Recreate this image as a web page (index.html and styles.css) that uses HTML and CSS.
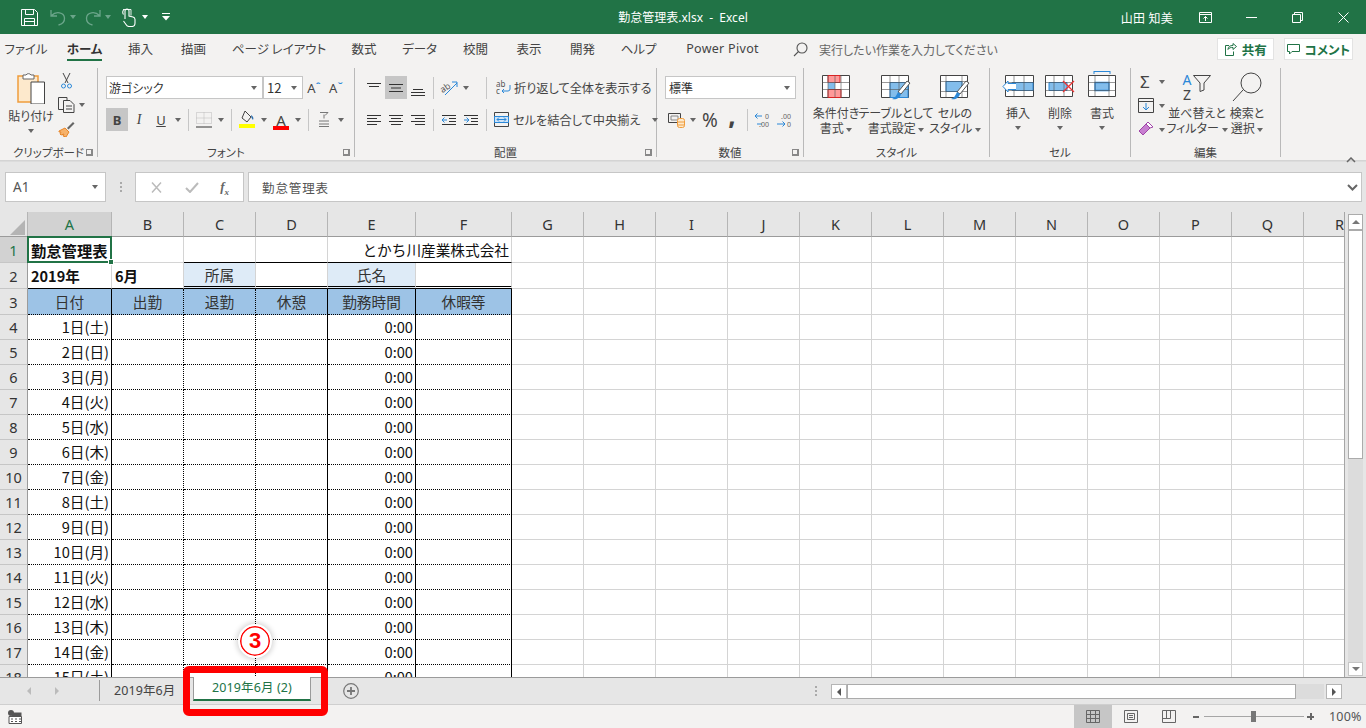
FILE: index.html
```html
<!DOCTYPE html>
<html lang="ja">
<head>
<meta charset="utf-8">
<title>勤怠管理表.xlsx - Excel</title>
<link rel="stylesheet" href="styles.css">
</head>
<body>
<div class="app">
  <header class="titlebar">
    <div class="qat">
      <span class="q q-save"><svg width="17" height="17" viewBox="0 0 17 17" fill="none" stroke="#fff"><path d="M.5.5h13l3 3v13H.5z"/><path d="M4.5.5v5h8v-5M3.5 16.5v-7h10v7M3.5 12.5h10"/></svg></span>
      <span class="q"><svg width="16" height="17" viewBox="0 0 16 17" fill="none" stroke="#6ba58a" stroke-width="1.3"><path d="M1 1v6h6M1.5 6.5C6 2 14 3 14.500 9c.2 3-2 6-6 7"/></svg></span>
      <span class="caret q-c dimc"></span>
      <span class="q q-gap"><svg width="16" height="17" viewBox="0 0 16 17" fill="none" stroke="#6ba58a" stroke-width="1.3"><path d="M15 1v6H9M14.500 6.500C10 2 2 3 1.500 9c-.2 3 2 6 6 7"/></svg></span>
      <span class="caret q-c dimc"></span>
      <span class="q q-touch"><svg width="14" height="19" viewBox="0 0 14 19" fill="none" stroke="#fff" stroke-width="1.1"><path d="M3 11V3a2 2 0 0 1 4 0v5l4 1c1.500.4 2 1 2 2.500V15c0 2-1 3.500-3 3.500H7c-1.500 0-2.500-1-3-2l-2.500-3.500M1.500 6.500a4 4 0 0 1 0-4.500M5 1"/><path d="M1 1.500h8v6" stroke-width=".9"/></svg></span>
      <span class="caret q-c2 whitec"></span>
      <span class="q q-cust"><svg width="10" height="8" viewBox="0 0 10 8" fill="#fff"><rect x="1" y="0" width="8" height="1"/><path d="M1 3h8L5 7.500z"/></svg></span>
    </div>
    <div class="doc-title">勤怠管理表.xlsx&nbsp; -&nbsp; Excel</div>
    <div class="win">
      <span class="user">山田 知美</span>
      <span class="wb"><svg width="13" height="11" viewBox="0 0 13 11" fill="none" stroke="#fff"><path d="M.5.5h12v10H.5zM.5 2.500h12M6.500 9V4.500M4.500 6.500l2-2 2 2"/></svg></span>
      <span class="wb"><svg width="11" height="1" viewBox="0 0 11 1"><rect width="11" height="1" fill="#fff"/></svg></span>
      <span class="wb"><svg width="11" height="11" viewBox="0 0 11 11" fill="none" stroke="#fff"><path d="M.5 2.500h8v8h-8zM2.500 2.500v-2h8v8h-2"/></svg></span>
      <span class="wb"><svg width="11" height="11" viewBox="0 0 11 11" fill="none" stroke="#fff"><path d="M.5.500l10 10M10.500.500l-10 10"/></svg></span>
    </div>
  </header>

  <nav class="tabs">
    <span class="tab">ファイル</span>
    <span class="tab on"><b>ホーム</b></span>
    <span class="tab">挿入</span>
    <span class="tab">描画</span>
    <span class="tab">ページ レイアウト</span>
    <span class="tab">数式</span>
    <span class="tab">データ</span>
    <span class="tab">校閲</span>
    <span class="tab">表示</span>
    <span class="tab">開発</span>
    <span class="tab">ヘルプ</span>
    <span class="tab">Power Pivot</span>
    <span class="tell">
      <svg width="15" height="15" viewBox="0 0 15 15" fill="none" stroke="#555" stroke-width="1.100"><circle cx="9" cy="6" r="5"/><path d="M5.500 9.500L1 14"/></svg>
      実行したい作業を入力してください
    </span>
    <span class="share"><svg width="13" height="13" viewBox="0 0 13 13" fill="none" stroke="#217346"><path d="M9 5.500v-2l3.500 3-3.500 3v-2c-2 0-4 0-5 2 0-3 2-4 5-4z" transform="translate(0 -3)"/><path d="M5 2.500H1.500v10h8v-4"/></svg><b>共有</b></span>
    <span class="share comment"><svg width="13" height="13" viewBox="0 0 13 13" fill="none" stroke="#217346"><path d="M.5 1.500h12v7H5L2.500 11V8.500h-2z"/></svg><b>コメント</b></span>
  </nav>

  <section class="ribbon">
    <div class="grp g-clip">
      <div class="gbody clip-body">
        <div class="paste">
          <svg width="29" height="32" viewBox="0 0 29 32"><path d="M1 4h20v26H1z" fill="#fde9cc" stroke="#f09d3c" stroke-width="1.500"/><path d="M6 3h3a3 3 0 0 1 5 0h3v4H6z" fill="#fff" stroke="#666"/><path d="M14 10h13.500v22H14z" fill="#fff" stroke="#444"/></svg>
          <span class="lbl">貼り付け</span>
          <span class="caret"></span>
        </div>
        <div class="clip-small">
          <span class="sm"><svg width="11" height="16" viewBox="0 0 11 16" fill="none" stroke="#444"><path d="M2 0l5 10M9 0L4 10"/><circle cx="2.500" cy="13" r="2" stroke="#2b88d8"/><circle cx="8.500" cy="13" r="2" stroke="#2b88d8"/></svg></span>
          <span class="sm"><svg width="17" height="16" viewBox="0 0 17 16" fill="none" stroke="#444"><path d="M5 12.500H.5V.5H9v3"/><path d="M5.500 3.500H12l4 4v8H5.500zM8 9h6M8 12h6"/></svg><span class="caret"></span></span>
          <span class="sm"><svg width="17" height="16" viewBox="0 0 17 16"><path d="M1 10l6-3 4 4-3 5-3-1 1-2-3 1-1-1 1-2-2 0z" fill="#f6b26b" stroke="#e8862a"/><path d="M9 7l6-6 1.500 1.500-6 6" fill="#666"/></svg></span>
        </div>
      </div>
      <div class="glabel">クリップボード</div>
      <i class="launch"></i>
    </div>

    <div class="grp g-font">
      <div class="gbody rows">
        <div class="row">
          <span class="combo c-font">游ゴシック<span class="caret"></span></span>
          <span class="combo c-size">12<span class="caret"></span></span>
          <span class="tb fontgrow">A<sup>ˆ</sup></span>
          <span class="tb fontgrow">A<sup>ˇ</sup></span>
        </div>
        <div class="row">
          <span class="tb sel bold">B</span>
          <span class="tb ital">I</span>
          <span class="tb under">U</span><span class="cw"><span class="caret"></span></span>
          <i class="sep"></i>
          <span class="tb"><svg width="16" height="16" viewBox="0 0 16 16" fill="none"><path d="M.5 .5h15v11H.5zM8 .5v11M.5 6h15" stroke="#bbb" stroke-dasharray="1 1"/><path d="M0 15h16" stroke="#333"/></svg></span><span class="cw"><span class="caret"></span></span>
          <i class="sep"></i>
          <span class="tb"><svg width="16" height="19" viewBox="0 0 16 19"><path d="M6 1l6 6-4 5-5-4z" fill="none" stroke="#444"/><path d="M12 5c2 1 3 3 2 5-1-1-2-3-2-5z" fill="#2b6fb0"/><rect y="14" width="16" height="4" fill="#ffff00"/></svg></span><span class="cw"><span class="caret"></span></span>
          <span class="tb colorA">A</span><span class="cw"><span class="caret"></span></span>
          <i class="sep"></i>
          <span class="tb"><svg width="12" height="17" viewBox="0 0 12 17" fill="none" stroke="#777"><path d="M2 1.500h8L7 4.500M6 3.500v4M1 10h10M1 13h10M1 15.500h10"/></svg></span><span class="cw"><span class="caret"></span></span>
        </div>
      </div>
      <div class="glabel">フォント</div>
      <i class="launch"></i>
    </div>

    <div class="grp g-align">
      <div class="gbody rows">
        <div class="row">
          <span class="tb"><svg class="al" viewBox="0 0 14 10"><path d="M0 .5h14M2 3.500h10"/></svg></span>
          <span class="tb sel"><svg class="al" viewBox="0 0 14 10"><path d="M0 1.500h14M2 5h10M0 8.500h14"/></svg></span>
          <span class="tb"><svg class="al al-b" viewBox="0 0 14 10"><path d="M2 3.500h10M0 6.500h14M0 9.500h14"/></svg></span>
          <i class="sep"></i>
          <span class="tb"><svg width="18" height="16" viewBox="0 0 18 16" fill="none"><text x="0" y="11" class="orient" transform="rotate(-35 5 8)">ab</text><path d="M5 15L17 3M12 2h5v5" stroke="#2b88d8"/></svg></span><span class="cw"><span class="caret"></span></span>
          <i class="sep sep-far"></i>
          <span class="txtbtn"><svg width="15" height="15" viewBox="0 0 15 15" fill="none"><text x="0" y="7" class="abc">ab</text><text x="0" y="14" class="abc">c</text><path d="M14 5v4a2 2 0 0 1-2 2H6M8 9l-2 2 2 2" stroke="#2b88d8"/></svg>折り返して全体を表示する</span>
        </div>
        <div class="row">
          <span class="tb"><svg class="al" viewBox="0 0 14 10"><path d="M0 .5h14M0 3.500h10M0 6.500h14M0 9.500h10"/></svg></span>
          <span class="tb"><svg class="al" viewBox="0 0 14 10"><path d="M0 .5h14M2 3.500h10M0 6.500h14M2 9.500h10"/></svg></span>
          <span class="tb"><svg class="al" viewBox="0 0 14 10"><path d="M0 .5h14M4 3.500h10M0 6.500h14M4 9.500h10"/></svg></span>
          <i class="sep"></i>
          <span class="tb"><svg class="al" viewBox="0 0 14 10"><path d="M0 .5h14M7 3.500h7M7 6.500h7M0 9.500h14"/><path d="M5 5H0M2.500 2.500L0 5l2.500 2.500" stroke="#2b88d8"/></svg></span>
          <span class="tb"><svg class="al" viewBox="0 0 14 10"><path d="M0 .5h14M7 3.500h7M7 6.500h7M0 9.500h14"/><path d="M0 5h5M2.500 2.500L5 5 2.500 7.500" stroke="#2b88d8"/></svg></span>
          <i class="sep"></i>
          <span class="txtbtn merge"><svg width="15" height="15" viewBox="0 0 15 15" fill="none"><path d="M.5.5h14v14H.5z" stroke="#444"/><path d="M.5 4.500h14v6H.5z" fill="#cfe4f7" stroke="#2b88d8"/><path d="M3 7.500h9M5 5.500l-2 2 2 2M10 5.500l2 2-2 2" stroke="#2b88d8"/></svg>セルを結合して中央揃え<span class="caret"></span></span>
        </div>
      </div>
      <div class="glabel">配置</div>
      <i class="launch"></i>
    </div>

    <div class="grp g-num">
      <div class="gbody rows">
        <div class="row">
          <span class="combo c-num">標準<span class="caret"></span></span>
        </div>
        <div class="row">
          <span class="tb"><svg width="17" height="17" viewBox="0 0 17 17" fill="none"><path d="M.5 2.500h12v9H.5z" stroke="#444"/><path d="M3 5h7v4H3z" stroke="#888"/><rect x="9.500" y="7.500" width="7" height="9" rx="2" fill="#fde9cc" stroke="#f09d3c"/><path d="M9.500 11h7M9.500 14h7" stroke="#f09d3c"/></svg></span><span class="cw"><span class="caret"></span></span>
          <span class="tb pct">%</span>
          <span class="tb comma">,</span>
          <i class="sep"></i>
          <span class="tb"><svg width="18" height="16" viewBox="0 0 18 16" fill="none"><path d="M8 4H1M3.500 1.500L1 4l2.500 2.500M8 12h-5" stroke="#2b88d8"/><text x="11" y="7" class="dec">0</text><text x="5" y="15" class="dec">.00</text></svg></span>
          <span class="tb"><svg width="18" height="16" viewBox="0 0 18 16" fill="none"><path d="M1 12h8M6.500 9.500L9 12l-2.500 2.500" stroke="#2b88d8"/><text x="5" y="7" class="dec">.00</text><text x="11" y="15" class="dec">0</text></svg></span>
        </div>
      </div>
      <div class="glabel">数値</div>
      <i class="launch"></i>
    </div>

    <div class="grp g-style">
      <div class="gbody big">
        <div class="bb w56">
          <svg class="bi" width="28" height="23" viewBox="0 0 28 23"><path d="M.5.500h27v22H.5z" fill="#fff" stroke="#444"/><path d="M6 .5h12v7H6z" fill="#f99" stroke="#d22"/><path d="M6 7.500h7v7H6z" fill="#83bdeb"/><path d="M6 14.500h13v8H6z" fill="#f99" stroke="#d22"/><path d="M6 .5v22M13 .5v22M19 .5v22M.5 7.500h27M.5 14.500h27" stroke="#555" fill="none" opacity=".6"/></svg>
          <span class="lbl">条件付き</span><span class="lbl">書式 <span class="caret"></span></span>
        </div>
        <div class="bb w64">
          <svg class="bi" width="30" height="28" viewBox="0 0 30 28"><path d="M.5.500h27v22H.5z" fill="#fff" stroke="#444"/><path d="M9 7.500h18v15H9z" fill="#83bdeb" stroke="#2b88d8"/><path d="M9 .5v22M18 .5v22M.5 7.500h27M.5 14.500h27" stroke="#555" fill="none" opacity=".6"/><path d="M29 8l-9 11-3-2 9-11z" fill="#fff" stroke="#555"/><path d="M17 17l3 2c-1 4-5 6-9 5 3-1 4-3 6-7z" fill="#2b88d8"/></svg>
          <span class="lbl">テーブルとして</span><span class="lbl">書式設定 <span class="caret"></span></span>
        </div>
        <div class="bb w54">
          <svg class="bi" width="30" height="28" viewBox="0 0 30 28"><path d="M.5.500h27v22H.5z" fill="#fff" stroke="#444"/><path d="M6 6.500h16v10H6z" fill="#83bdeb" stroke="#2b88d8"/><path d="M6 .5v22M22 .5v22M.5 6.500h27M.5 16.500h27" stroke="#555" fill="none" opacity=".6"/><path d="M29 8l-9 11-3-2 9-11z" fill="#fff" stroke="#555"/><path d="M17 17l3 2c-1 4-5 6-9 5 3-1 4-3 6-7z" fill="#2b88d8"/></svg>
          <span class="lbl">セルの</span><span class="lbl">スタイル <span class="caret"></span></span>
        </div>
      </div>
      <div class="glabel">スタイル</div>
    </div>

    <div class="grp g-cell">
      <div class="gbody big">
        <div class="bb w42">
          <svg class="bi" width="32" height="23" viewBox="0 0 32 23"><path d="M3.500.500h28v21h-28z" fill="#fff" stroke="#444"/><path d="M10 7.500h21v8H10z" fill="#83bdeb" stroke="#2b88d8"/><path d="M12 .5v21M22 .5v21M3.500 7.500h28M3.500 15.500h28" stroke="#555" fill="none" opacity=".6"/><path d="M14 8.500H6V6L1 11.500 6 17v-2.500h8" fill="#fff" stroke="#2b88d8"/></svg>
          <span class="lbl">挿入</span><span class="caret"></span>
        </div>
        <div class="bb w42">
          <svg class="bi" width="30" height="23" viewBox="0 0 30 23"><path d="M.5.500h27v21H.5z" fill="#fff" stroke="#444"/><path d="M4 7.500h18v8H4z" fill="#83bdeb" stroke="#2b88d8"/><path d="M9 .5v21M19 .5v21M.5 7.500h27M.5 15.500h27" stroke="#555" fill="none" opacity=".6"/><path d="M18 6l11 11M29 6L18 17" stroke="#e33" stroke-width="1.300"/></svg>
          <span class="lbl">削除</span><span class="caret"></span>
        </div>
        <div class="bb w42 top0">
          <svg class="bi" width="28" height="27" viewBox="0 0 28 27"><path d="M6 .5h16M6 0v3M22 0v3" stroke="#2b88d8" fill="none"/><path d="M.5 4.500h27v21H.5z" fill="#fff" stroke="#444"/><path d="M7 11.500h14v8H7z" fill="#83bdeb" stroke="#2b88d8" stroke-width="1.300"/><path d="M7 4.500v21M21 4.500v21M.5 11.500h27M.5 19.500h27" stroke="#555" fill="none" opacity=".6"/></svg>
          <span class="lbl">書式</span><span class="caret"></span>
        </div>
      </div>
      <div class="glabel">セル</div>
    </div>

    <div class="grp g-edit">
      <div class="gbody big">
        <div class="edit-small">
          <span class="sm"><span class="sigma">Σ</span><span class="caret"></span></span>
          <span class="sm"><svg width="16" height="15" viewBox="0 0 16 15" fill="none"><path d="M.5.500h15v14H.5z" stroke="#444"/><path d="M.5 3.500h15" stroke="#444"/><path d="M8 5v7M5 9l3 3 3-3" stroke="#2b88d8"/></svg><span class="caret"></span></span>
          <span class="sm"><svg width="16" height="15" viewBox="0 0 16 15"><path d="M1 9l7-7 4 4-7 7z" fill="#c77fd0" stroke="#a045a8"/><path d="M8 2l2-2 5 5-3 1z" fill="#fff" stroke="#a045a8"/></svg><span class="caret"></span></span>
        </div>
        <div class="bb w54 sort">
          <span class="sort-ic"><span class="az"><span class="a-l">A</span><span>Z</span></span><svg width="18" height="17" viewBox="0 0 18 17" fill="none" stroke="#444"><path d="M.5.500h17L11 8v7l-4 1.500V8z"/></svg></span>
          <span class="lbl">並べ替えと</span><span class="lbl">フィルター <span class="caret"></span></span>
        </div>
        <div class="bb w46">
          <svg class="bi" width="30" height="30" viewBox="0 0 30 30" fill="none" stroke="#444"><circle cx="19" cy="11" r="10"/><path d="M11 18L1 29"/></svg>
          <span class="lbl">検索と</span><span class="lbl">選択 <span class="caret"></span></span>
        </div>
      </div>
      <div class="glabel">編集</div>
    </div>
    <div class="collapse"><svg width="10" height="6" viewBox="0 0 10 6" fill="none" stroke="#666" stroke-width="1.500"><path d="M1 5l4-4 4 4"/></svg></div>
  </section>

  <section class="fbar">
    <div class="namebox">A1<span class="caret"></span></div>
    <div class="fdots"><i></i><i></i><i></i></div>
    <div class="fbtns">
      <svg width="13" height="11" viewBox="0 0 13 11" fill="none" stroke="#bbb" stroke-width="1.500"><path d="M2 .5l9 10M11 .5l-9 10"/></svg>
      <svg width="14" height="11" viewBox="0 0 14 11" fill="none" stroke="#bbb" stroke-width="2"><path d="M1 6l4 4 8-9"/></svg>
      <span class="fx">f<sub>x</sub></span>
    </div>
    <div class="finput">勤怠管理表<svg width="11" height="7" viewBox="0 0 11 7" fill="none" stroke="#666" stroke-width="2"><path d="M1 1l4.500 4.500L10 1"/></svg></div>
  </section>

  <section class="sheetwrap">
    <div class="sheet">
      <table class="grid">
        <colgroup><col class="c-rh"><col class="c-a"><col class="c-n"><col class="c-n"><col class="c-n"><col class="c-e"><col class="c-f"><col class="c-n"><col class="c-n"><col class="c-n"><col class="c-n"><col class="c-n"><col class="c-n"><col class="c-n"><col class="c-n"><col class="c-n"><col class="c-n"><col class="c-n"><col class="c-n"></colgroup>
        <thead><tr>
          <th class="corner"><span class="tri"></span></th><th class="act">A</th><th>B</th><th>C</th><th>D</th><th>E</th><th>F</th><th>G</th><th>H</th><th>I</th><th>J</th><th>K</th><th>L</th><th>M</th><th>N</th><th>O</th><th>P</th><th>Q</th><th>R</th>
        </tr></thead>
        <tbody>
          <tr class="tall r1"><th class="act">1</th><td class="a1 b">勤怠管理表<i class="cursor"></i></td><td></td><td></td><td></td><td class="rt" colspan="2">とかち川産業株式会社</td><td></td><td></td><td></td><td></td><td></td><td></td><td></td><td></td><td></td><td></td><td></td><td></td></tr>
          <tr class="tall r2"><th>2</th><td class="b year">2019年</td><td class="b year">6月</td><td class="lb ct">所属</td><td></td><td class="lb ct">氏名</td><td></td><td></td><td></td><td></td><td></td><td></td><td></td><td></td><td></td><td></td><td></td><td></td><td></td></tr>
          <tr class="tall d hd"><th>3</th><td>日付</td><td>出勤</td><td>退勤</td><td>休憩</td><td>勤務時間</td><td>休暇等</td><td></td><td></td><td></td><td></td><td></td><td></td><td></td><td></td><td></td><td></td><td></td><td></td></tr>
          <tr class="d"><th>4</th><td>1日(土)</td><td></td><td></td><td></td><td>0:00</td><td></td><td></td><td></td><td></td><td></td><td></td><td></td><td></td><td></td><td></td><td></td><td></td><td></td></tr>
          <tr class="d"><th>5</th><td>2日(日)</td><td></td><td></td><td></td><td>0:00</td><td></td><td></td><td></td><td></td><td></td><td></td><td></td><td></td><td></td><td></td><td></td><td></td><td></td></tr>
          <tr class="d"><th>6</th><td>3日(月)</td><td></td><td></td><td></td><td>0:00</td><td></td><td></td><td></td><td></td><td></td><td></td><td></td><td></td><td></td><td></td><td></td><td></td><td></td></tr>
          <tr class="d"><th>7</th><td>4日(火)</td><td></td><td></td><td></td><td>0:00</td><td></td><td></td><td></td><td></td><td></td><td></td><td></td><td></td><td></td><td></td><td></td><td></td><td></td></tr>
          <tr class="d"><th>8</th><td>5日(水)</td><td></td><td></td><td></td><td>0:00</td><td></td><td></td><td></td><td></td><td></td><td></td><td></td><td></td><td></td><td></td><td></td><td></td><td></td></tr>
          <tr class="d"><th>9</th><td>6日(木)</td><td></td><td></td><td></td><td>0:00</td><td></td><td></td><td></td><td></td><td></td><td></td><td></td><td></td><td></td><td></td><td></td><td></td><td></td></tr>
          <tr class="d"><th>10</th><td>7日(金)</td><td></td><td></td><td></td><td>0:00</td><td></td><td></td><td></td><td></td><td></td><td></td><td></td><td></td><td></td><td></td><td></td><td></td><td></td></tr>
          <tr class="d"><th>11</th><td>8日(土)</td><td></td><td></td><td></td><td>0:00</td><td></td><td></td><td></td><td></td><td></td><td></td><td></td><td></td><td></td><td></td><td></td><td></td><td></td></tr>
          <tr class="d"><th>12</th><td>9日(日)</td><td></td><td></td><td></td><td>0:00</td><td></td><td></td><td></td><td></td><td></td><td></td><td></td><td></td><td></td><td></td><td></td><td></td><td></td></tr>
          <tr class="d"><th>13</th><td>10日(月)</td><td></td><td></td><td></td><td>0:00</td><td></td><td></td><td></td><td></td><td></td><td></td><td></td><td></td><td></td><td></td><td></td><td></td><td></td></tr>
          <tr class="d"><th>14</th><td>11日(火)</td><td></td><td></td><td></td><td>0:00</td><td></td><td></td><td></td><td></td><td></td><td></td><td></td><td></td><td></td><td></td><td></td><td></td><td></td></tr>
          <tr class="d"><th>15</th><td>12日(水)</td><td></td><td></td><td></td><td>0:00</td><td></td><td></td><td></td><td></td><td></td><td></td><td></td><td></td><td></td><td></td><td></td><td></td><td></td></tr>
          <tr class="d"><th>16</th><td>13日(木)</td><td></td><td></td><td></td><td>0:00</td><td></td><td></td><td></td><td></td><td></td><td></td><td></td><td></td><td></td><td></td><td></td><td></td><td></td></tr>
          <tr class="d"><th>17</th><td>14日(金)</td><td></td><td></td><td></td><td>0:00</td><td></td><td></td><td></td><td></td><td></td><td></td><td></td><td></td><td></td><td></td><td></td><td></td><td></td></tr>
          <tr class="d"><th>18</th><td>15日(土)</td><td></td><td></td><td></td><td>0:00</td><td></td><td></td><td></td><td></td><td></td><td></td><td></td><td></td><td></td><td></td><td></td><td></td><td></td></tr>
        </tbody>
      </table>
    </div>
    <div class="vscroll">
      <span class="sbtn"><i class="up"></i></span>
      <span class="vthumb"></span>
      <span class="vtrack"></span>
      <span class="sbtn"><i class="down"></i></span>
    </div>
  </section>

  <section class="sheettabs">
    <span class="nav-arrows"><i class="al-left"></i><i class="al-right"></i></span>
    <i class="tabsep"></i>
    <span class="stab">2019年6月</span>
    <span class="stab active">2019年6月 (2)</span>
    <span class="addsheet"><svg width="16" height="16" viewBox="0 0 16 16" fill="none" stroke="#777"><circle cx="8" cy="8" r="7.300" stroke-width="1.200"/><path d="M8 4v8M4 8h8" stroke-width="1.800"/></svg></span>
    <span class="hs-dots"><i></i><i></i><i></i></span>
    <span class="hscroll">
      <span class="hbtn"><i class="al-left dark"></i></span>
      <span class="hthumb"></span>
      <span class="htrack"></span>
      <span class="hbtn"><i class="al-right dark"></i></span>
    </span>
  </section>

  <footer class="status">
    <svg class="macro" width="14" height="14" viewBox="0 0 14 14"><circle cx="3" cy="3" r="3" fill="#555"/><path d="M1 6.500h12.500v7H1z" fill="#fff" stroke="#555"/><path d="M4 2.500h9.500v4H4z" fill="#555"/><path d="M3 9h2M7 9h2M11 9h2M3 11.500h2M7 11.500h2M11 11.500h2" stroke="#555"/></svg>
    <span class="views">
      <span class="vw on"><svg width="14" height="13" viewBox="0 0 14 13" fill="none" stroke="#666"><path d="M.5.500h13v12H.5zM.5 4.500h13M.5 8.500h13M4.500.500v12M9.500.500v12"/></svg></span>
      <span class="vw"><svg width="14" height="13" viewBox="0 0 14 13" fill="none" stroke="#666"><path d="M.5.500h13v12H.5zM3.500 3.500h7v6h-7zM5 5.500h4M5 7.500h4"/></svg></span>
      <span class="vw"><svg width="14" height="13" viewBox="0 0 14 13" fill="none" stroke="#666"><path d="M.5.500h13v12H.5zM.5 8.500h8M8.500.500v8M4.500.500v8"/></svg></span>
    </span>
    <span class="zoom">
      <i class="zm"></i>
      <span class="slider"><i class="knob"></i></span>
      <i class="zp"></i>
    </span>
    <span class="pct100">100%</span>
  </footer>

  <div class="callout-box"></div>
  <div class="callout-num">3</div>
</div>
</body>
</html>
```
FILE: styles.css
```css
*{box-sizing:border-box}
html,body{margin:0;padding:0;height:100%;overflow:hidden}
body{font-family:"Noto Sans CJK JP","Noto Sans",sans-serif;color:#444;background:#f3f2f1}
.app{position:relative;width:1366px;height:728px;display:flex;flex-direction:column;overflow:hidden;font-feature-settings:"palt"}
i{display:block}
.caret{display:inline-block;width:0;height:0;border-left:3px solid transparent;border-right:3px solid transparent;border-top:4px solid #666;vertical-align:middle}
.whitec{border-top-color:#fff}
.dimc{border-top-color:#6ba58a}

/* title bar */
.titlebar{height:34px;flex:none;background:#217346;display:grid;grid-template-columns:1fr auto 1fr;align-items:center;color:#fff;font-size:12px}
.qat{display:flex;align-items:center;padding-left:12px}
.q{width:24px;display:flex;justify-content:center;align-items:center}
.q-save{width:34px}
.q-c{margin-right:5px;margin-left:0}
.q-gap{margin-left:0}
.q-touch{margin-left:1px}
.q-c2{margin-left:1px}
.q-cust{width:18px;margin-left:9px}
.doc-title{font-family:"Noto Sans","Noto Sans CJK JP",sans-serif;white-space:nowrap}
.win{display:flex;justify-content:flex-end;align-items:center}
.user{margin-right:9px;letter-spacing:.3px}
.wb{width:46px;height:34px;display:flex;align-items:center;justify-content:center}

/* tabs */
.tabs{height:30px;flex:none;display:flex;align-items:center;background:#f3f2f1;font-size:12.5px;position:relative}
.tab{flex:none;text-align:center;white-space:nowrap;height:30px;line-height:30px;color:#444}
.tab:nth-child(1){width:52px}.tab:nth-child(2){width:65px}.tab:nth-child(3){width:47px}.tab:nth-child(4){width:59px}
.tab:nth-child(5){width:112px}.tab:nth-child(6){width:58px}.tab:nth-child(7){width:53px}.tab:nth-child(8){width:59px}
.tab:nth-child(9){width:48px}.tab:nth-child(10){width:59px}.tab:nth-child(11){width:53px}
.tab:nth-child(12){width:115px;font-family:"Noto Sans","Noto Sans CJK JP",sans-serif;letter-spacing:.3px}
.tab.on b{display:inline-block;height:27px;line-height:30px;border-bottom:2px solid #217346;color:#217346;font-weight:700;color:#333}
.tell{display:flex;align-items:center;gap:11px;margin-left:13px;color:#666;font-size:12px;white-space:nowrap}
.share{height:22px;width:59px;margin-left:auto;background:#fff;border:1px solid #e3e3e3;display:flex;align-items:center;justify-content:center;gap:5px;color:#217346;font-size:12.500px}
.share:not(.comment){margin-left:219px}
.share.comment{width:72px;margin-left:10px;margin-right:13px}
.share b{font-weight:700}

/* ribbon */
.ribbon{height:97px;flex:none;display:flex;background:#f3f2f1;padding-top:4px;border-bottom:1px solid #d4d4d4;position:relative;font-size:12px}
.grp{flex:none;height:89px;position:relative;border-right:1px solid #b9b9b9;display:flex;flex-direction:column}
.g-clip{width:98px;padding-left:10px}
.g-font{width:257px;padding-left:8px}
.g-align{width:302px;padding-left:8px}
.g-num{width:147px;padding-left:8px}
.g-style{width:186px;padding-left:4px}
.g-cell{width:141px;padding-left:7px}
.g-edit{width:150px;padding-left:7px}
.gbody{height:76px;flex:none}
.glabel{position:absolute;left:0;right:0;bottom:-2px;height:14px;line-height:14px;text-align:center;font-size:11.500px;color:#444}
.launch{position:absolute;right:4px;bottom:1px;width:7px;height:7px;border-left:1px solid #888;border-top:1px solid #888;border-right:2px solid #888;border-bottom:2px solid #888;background:#f3f2f1}
.lbl{display:block;line-height:15px;white-space:nowrap;color:#444}
.clip-body{display:flex}
.paste{width:42px;display:flex;flex-direction:column;align-items:center;padding-top:4px}
.paste svg{margin-bottom:4px}
.paste .caret{margin-top:6px}
.clip-small{margin-left:6px;display:flex;flex-direction:column;padding-top:3px;gap:4px}
.sm{height:20px;display:flex;align-items:center;gap:4px}
.sm:first-child{padding-left:3px}
.rows{padding-top:8px;display:flex;flex-direction:column;gap:9px}
.row{display:flex;height:23px;align-items:center}
.combo{height:23px;background:#fff;border:1px solid #c6c6c6;display:flex;align-items:center;justify-content:space-between;padding:0 5px 0 2px;font-size:12px;color:#333}
.c-font{width:157px}
.c-size{width:40px;padding-left:3px;font-size:13px}
.c-num{width:131px;padding-left:3px}
.tb{width:22px;height:23px;flex:none;display:flex;align-items:center;justify-content:center;color:#444}
.tb.sel{background:#c6c6c6}
.cw{width:12px;flex:none;display:flex;justify-content:center}
.sep{width:1px;height:22px;background:#c6c6c6;margin:0 4px;flex:none}
.sep-far{margin-left:14px}
.bold{font-weight:700;font-size:13px;font-family:"Noto Sans",sans-serif}
.ital{font-style:italic;font-family:"Liberation Serif",serif;font-size:14px}
.under{text-decoration:underline;font-size:13px;font-family:"Noto Sans",sans-serif}
.fontgrow{font-size:13px;font-family:"Noto Sans",sans-serif;align-items:center}
.fontgrow sup{font-size:11px;color:#2b88d8;line-height:0;position:relative;top:-1px;font-weight:700}
.colorA{font-size:15px;font-family:"Noto Sans",sans-serif;line-height:16px;border-bottom:0;background:linear-gradient(#ff0000,#ff0000) center 18px/16px 4px no-repeat}
.al{width:14px;height:10px;fill:none;stroke:#333}
.al-b{margin-top:6px}
.orient{font-size:9px;fill:#555;stroke:none;font-family:"Noto Sans",sans-serif}
.abc{font-size:8px;fill:#555;font-family:"Noto Sans",sans-serif}
.dec{font-size:7px;fill:#666;font-family:"Noto Sans",sans-serif}
.txtbtn{display:flex;align-items:center;gap:3px;padding-left:5px;white-space:nowrap;font-size:12.200px}
.merge{padding-left:3px;gap:4px}
.merge .caret{margin-left:8px}
.pct{font-size:19px;font-family:"Noto Sans",sans-serif}
.comma{font-size:22px;font-weight:900;font-family:"Noto Sans",sans-serif;line-height:1;padding-bottom:8px}
.big{display:flex;padding-top:4px}
.bb{flex:none;display:flex;flex-direction:column;align-items:center;text-align:center}
.bi{margin-top:3px;margin-bottom:7px;height:23px}
.bb svg.bi{flex:none}
.w42{width:42px}.w46{width:46px}.w54{width:54px}.w56{width:56px}.w64{width:64px}
.bb > .caret{margin-top:6px}
.bb svg[height="28"]{height:28px;margin-bottom:2px}
.bb svg[height="27"]{height:27px;margin-top:-1px}
.bb svg[height="30"]{height:30px;margin-top:0;margin-bottom:3px}
.edit-small{width:32px;display:flex;flex-direction:column;gap:3px;padding-top:-1px;margin-top:-1px}
.edit-small .sm{height:21px;gap:5px}
.edit-small .sm:first-child{padding-left:2px}
.sigma{font-size:17px;line-height:17px;color:#444;font-family:"Noto Sans",sans-serif;width:14px}
.sort-ic{display:flex;align-items:flex-end;gap:2px;height:30px;margin-bottom:3px}
.az{display:flex;flex-direction:column;font-size:14px;line-height:15px;font-family:"Noto Sans",sans-serif;color:#444}
.a-l{color:#2b88d8}
.sort-ic svg{margin-bottom:10px}
.collapse{position:absolute;left:1346px;top:85px}

/* formula bar */
.fbar{height:51px;flex:none;background:#e6e6e6;border-top:1px solid #dcdcdc;display:flex;align-items:flex-start;padding-top:10px;padding-left:5px;font-size:13px}
.namebox{width:101px;height:30px;background:#fff;border:1px solid #c6c6c6;display:flex;align-items:center;justify-content:space-between;padding:0 7px;font-size:13.500px;color:#555;font-family:"Noto Sans",sans-serif}
.fdots{width:29px;height:30px;display:flex;flex-direction:column;align-items:center;justify-content:center;gap:2px}
.fdots i{width:2px;height:2px;background:#aaa}
.fbtns{width:109px;height:30px;background:#fff;border:1px solid #c6c6c6;display:flex;align-items:center;justify-content:space-between;padding:0 14px 0 14px}
.fx{font-family:"Liberation Serif",serif;font-style:italic;font-weight:700;font-size:13px;color:#666}
.fx sub{font-size:9px;line-height:0}
.finput{width:1114px;height:30px;margin-left:4px;background:#fff;border:1px solid #c6c6c6;display:flex;align-items:center;justify-content:space-between;padding:0 3px 0 13px;color:#555;letter-spacing:.9px;font-size:12.500px}

/* sheet */
.sheetwrap{height:465px;flex:none;display:flex;background:#e6e6e6}
.sheet{width:1345px;height:465px;overflow:hidden;flex:none;border-right:1px solid #a6a6a6;background:#fff}
.grid{table-layout:fixed;border-collapse:separate;border-spacing:0;width:1376px;font-size:14.670px;color:#111}
.c-rh{width:28px}.c-a{width:84px}.c-n{width:72px}.c-e{width:88px}.c-f{width:96px}
.grid thead th{height:25px;background:#e6e6e6;border-right:1px solid #b5b5b5;border-bottom:1px solid #9b9b9b;font-weight:400;font-size:14.500px;color:#333;padding:0;font-family:"Noto Sans",sans-serif;line-height:24px}
.grid thead th.act{background:#d2d2d2;color:#217346;border-bottom-color:#217346}
.corner{position:relative}
.tri{display:block;width:0;height:0;border-style:solid;border-width:0 0 15px 15px;border-color:transparent transparent #b4b4b4 transparent;margin:6px 0 0 10px}
.grid tbody th{background:#e6e6e6;border-right:1px solid #9b9b9b;border-bottom:1px solid #c6c6c6;font-weight:400;font-size:14.500px;color:#333;padding:0;line-height:18px;font-family:"Noto Sans",sans-serif}
.grid tbody th.act{background:#d2d2d2;color:#217346;border-right-color:#217346}
.grid tr{height:25px}
.grid tr.tall{height:26px}
.grid td{padding:0 2px;border-right:1px solid #d4d4d4;border-bottom:1px solid #d4d4d4;line-height:18px;height:25px;white-space:nowrap;overflow:hidden;font-family:"Noto Sans CJK JP","Noto Sans",sans-serif;font-feature-settings:"palt" 0;text-align:right}
.grid tr.tall td{height:26px}
.grid td.b{font-weight:700;text-align:left;font-size:15.300px}
.grid td.year{font-size:14.500px;padding-left:3px}
.grid td.a1{position:relative;overflow:visible;padding-left:3px;line-height:24px}
.cursor{position:absolute;left:-1px;top:-1px;right:-1px;bottom:-1px;border:2px solid #217346}
.cursor::after{content:"";position:absolute;right:-4px;bottom:-4px;width:5px;height:5px;background:#217346;border:1px solid #fff;box-sizing:content-box;width:4px;height:4px}
.grid td.rt{text-align:right;padding-right:2px}
.grid td.ct{text-align:center}
.grid td.lb{background:#deebf7;color:#333}
.r1 td:nth-child(n+4):nth-child(-n+6){border-bottom:1px solid #000}
.r2 td:nth-child(-n+3){border-bottom:1px solid #000}
.r2 td:nth-child(n+4):nth-child(-n+7){border-bottom:3px double #000}
.d td:nth-child(-n+7){border-bottom:1px dotted #000}
.d td:nth-child(2),.d td:nth-child(5),.d td:nth-child(6),.d td:nth-child(7){border-right:1px solid #000}
.d td:nth-child(3),.d td:nth-child(4){border-right:1px dotted #000}
.hd td:nth-child(-n+7){background:#9dc3e6;text-align:center;color:#333}
.vscroll{flex:1;display:flex;flex-direction:column;padding:2px 3px 1px 3px;align-items:stretch}
.sbtn{height:16px;background:#fff;border:1px solid #ababab;display:flex;align-items:center;justify-content:center;flex:none}
.sbtn:last-child{border-color:#c6c6c6;height:14px}
.up{width:0;height:0;border-left:4px solid transparent;border-right:4px solid transparent;border-bottom:4px solid #777}
.down{width:0;height:0;border-left:4px solid transparent;border-right:4px solid transparent;border-top:4px solid #777}
.vthumb{height:229px;background:#fff;border:1px solid #ababab;flex:none}
.vtrack{flex:1;background:#dcdcdc}

/* sheet tabs */
.sheettabs{height:28px;flex:none;background:#e6e6e6;border-top:1px solid #9b9b9b;border-bottom:1px solid #cfcfcf;display:flex;align-items:flex-start;font-size:12.500px;color:#444}
.nav-arrows{width:99px;height:26px;display:flex;align-items:center;gap:24px;padding-left:27px}
.al-left{width:0;height:0;border-top:4px solid transparent;border-bottom:4px solid transparent;border-right:4px solid #bbb}
.al-right{width:0;height:0;border-top:4px solid transparent;border-bottom:4px solid transparent;border-left:4px solid #bbb}
.al-left.dark{border-right-color:#555}
.al-right.dark{border-left-color:#555}
.tabsep{width:1px;height:21px;background:#9b9b9b;margin-top:2px}
.stab{height:26px;line-height:25px;padding-left:14px;width:93px;white-space:nowrap;font-family:"Noto Sans","Noto Sans CJK JP",sans-serif;letter-spacing:.1px;font-feature-settings:"palt" 0}
.stab.active{width:118px;background:#fff;border-left:1px solid #9b9b9b;border-right:1px solid #9b9b9b;border-bottom:2px solid #217346;color:#217346;height:24px;line-height:22px;text-align:center;padding:0;margin-top:-1px}
.addsheet{margin-left:32px;height:26px;display:flex;align-items:center}
.hs-dots{margin-left:456px;height:26px;display:flex;flex-direction:column;justify-content:center;gap:2px;align-items:center}
.hs-dots i{width:2px;height:2px;background:#aaa}
.hscroll{margin-left:14px;display:flex;height:15px;margin-top:6px;width:511px}
.hbtn{width:16px;height:15px;background:#fff;border:1px solid #b5b5b5;display:flex;align-items:center;justify-content:center;flex:none}
.hthumb{width:449px;background:#fff;border:1px solid #ababab;flex:none}
.htrack{flex:1;background:#dcdcdc;margin-right:2px}

/* status */
.status{flex:1;background:#f3f2f1;display:flex;align-items:center;padding-left:8px;font-size:13px;color:#555}
.macro{flex:none}
.views{display:flex;margin-left:1052px;height:100%}
.vw{width:38px;display:flex;align-items:center;justify-content:center;margin-right:0}
.vw.on{background:#c6c6c6;margin-right:0}
.zoom{display:flex;align-items:center;margin-left:5px;gap:3px}
.zm{width:6px;height:2px;background:#666;margin:0 2px 0 0}
.slider{display:block;width:100px;height:1px;background:#a6a6a6;position:relative}
.knob{position:absolute;left:47px;top:-5px;width:5px;height:11px;background:#777}
.zp{width:7px;height:7px;background:linear-gradient(#666,#666) center/7px 2px no-repeat,linear-gradient(#666,#666) center/2px 7px no-repeat}
.pct100{margin-left:15px;font-family:"Noto Sans",sans-serif;font-size:12.500px;letter-spacing:.2px}

/* callout */
.callout-box{position:absolute;left:183px;top:666px;width:145px;height:50px;border:7px solid #f00;border-radius:6px}
.callout-num{position:absolute;left:238px;top:624px;width:34px;height:34px;border-radius:50%;background:#fff;border:2px solid #fff;box-shadow:0 0 0 0 #fff,0 0 5px 2px rgba(0,0,0,.15),inset 0 0 0 1.500px #f00;color:#f00;font:900 22px/30px "Liberation Sans",sans-serif;text-align:center;font-feature-settings:normal}
```
